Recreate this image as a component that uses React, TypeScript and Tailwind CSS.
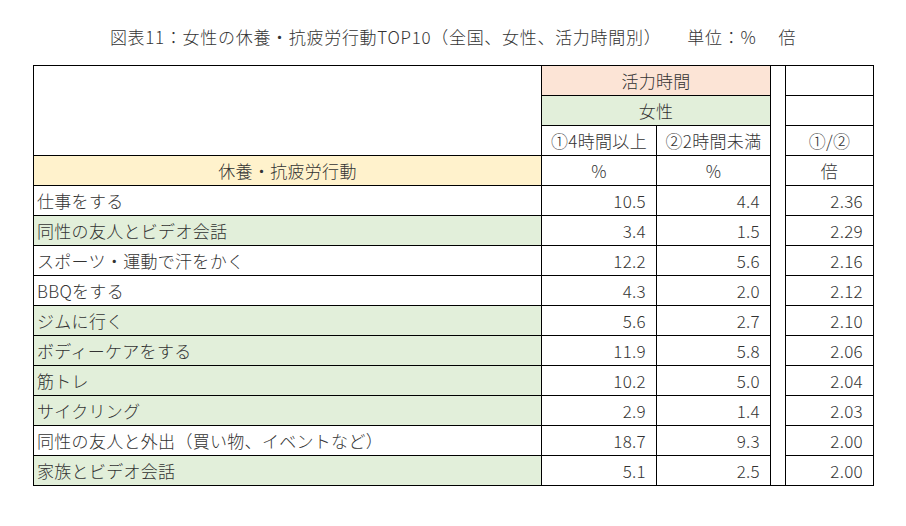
const rows = [
  { name: "仕事をする", a: "10.5", b: "4.4", r: "2.36", green: false },
  { name: "同性の友人とビデオ会話", a: "3.4", b: "1.5", r: "2.29", green: true },
  { name: "スポーツ・運動で汗をかく", a: "12.2", b: "5.6", r: "2.16", green: false },
  { name: "BBQをする", a: "4.3", b: "2.0", r: "2.12", green: false },
  { name: "ジムに行く", a: "5.6", b: "2.7", r: "2.10", green: true },
  { name: "ボディーケアをする", a: "11.9", b: "5.8", r: "2.06", green: true },
  { name: "筋トレ", a: "10.2", b: "5.0", r: "2.04", green: true },
  { name: "サイクリング", a: "2.9", b: "1.4", r: "2.03", green: true },
  { name: "同性の友人と外出（買い物、イベントなど）", a: "18.7", b: "9.3", r: "2.00", green: false },
  { name: "家族とビデオ会話", a: "5.1", b: "2.5", r: "2.00", green: true },
];

const cell = "border-r border-b border-black flex items-center";

export default function App() {
  return (
    <div
      className="w-[906px] h-[526px] bg-white text-[#333] text-[17px] leading-none font-light tracking-[0.3px]"
      style={{ fontFamily: '"Noto Sans CJK JP", "Noto Sans", sans-serif' }}
    >
      <div className="h-[65px] flex justify-center pt-[28px] tracking-[0.7px]">
        <p>図表11：女性の休養・抗疲労行動TOP10（全国、女性、活力時間別）</p>
        <p className="ml-[26px]">単位：%</p>
        <p className="ml-[22px]">倍</p>
      </div>

      <div className="ml-[33px] w-[841px] border-l border-t border-black grid grid-cols-[508px_115px_114px_15px_88px] grid-rows-[repeat(14,30px)]">
        {/* spacer column between the figures and the ratio */}
        <div className="col-start-4 row-start-1 row-span-14 border-r border-b border-black" />

        <div className={`${cell} row-span-3`} />
        <div className={`${cell} col-span-2 justify-center bg-[#fce4d6]`}>活力時間</div>
        <div className={cell} />
        <div className={`${cell} col-span-2 justify-center bg-[#e2efda]`}>女性</div>
        <div className={cell} />
        <div className={`${cell} justify-center`}>①4時間以上</div>
        <div className={`${cell} justify-center`}>②2時間未満</div>
        <div className={`${cell} justify-center`}>①/②</div>

        <div className={`${cell} justify-center bg-[#fff2cc]`}>休養・抗疲労行動</div>
        <div className={`${cell} justify-center`}>%</div>
        <div className={`${cell} justify-center`}>%</div>
        <div className={`${cell} justify-center`}>倍</div>

        {rows.map((row) => (
          <div key={row.name} className="contents">
            <div className={`${cell} pl-[3px] ${row.green ? "bg-[#e2efda]" : ""}`}>{row.name}</div>
            <div className={`${cell} justify-end pr-[10px]`}>{row.a}</div>
            <div className={`${cell} justify-end pr-[10px]`}>{row.b}</div>
            <div className={`${cell} justify-end pr-[10px]`}>{row.r}</div>
          </div>
        ))}
      </div>
    </div>
  );
}
